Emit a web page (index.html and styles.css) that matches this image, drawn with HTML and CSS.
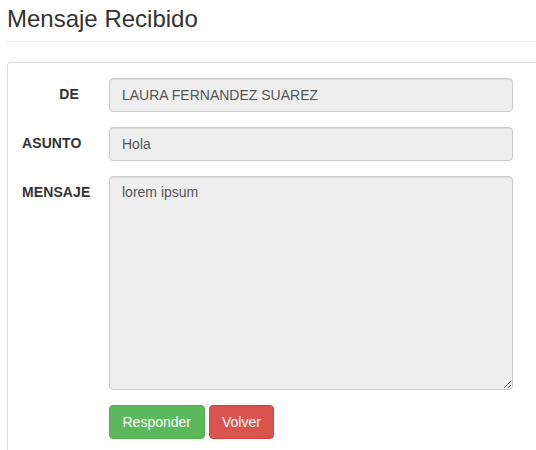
FILE: index.html
```html
<!DOCTYPE html>
<html lang="es">
<head>
<meta charset="utf-8">
<title>Mensaje Recibido</title>
<link rel="stylesheet" href="styles.css">
</head>
<body>
<div class="page">
  <h1 class="page-header">Mensaje Recibido</h1>
  <div class="panel">
    <form class="form">
      <label class="control-label label-de">DE</label>
      <input class="form-control" type="text" value="LAURA FERNANDEZ SUAREZ" readonly>
      <label class="control-label">ASUNTO</label>
      <input class="form-control" type="text" value="Hola" readonly>
      <label class="control-label">MENSAJE</label>
      <textarea class="form-control textarea" readonly>lorem ipsum</textarea>
      <span></span>
      <div class="actions">
        <button type="button" class="btn btn-success">Responder</button>
        <button type="button" class="btn btn-danger">Volver</button>
      </div>
    </form>
  </div>
</div>
</body>
</html>
```
FILE: styles.css
```css
html, body {
  margin: 0;
  padding: 0;
  overflow: hidden;
  background: #fff;
}
body {
  font-family: "Liberation Sans", Arial, sans-serif;
  font-size: 14px;
  line-height: 1.42857;
  color: #333;
}
.page {
  padding-left: 7px;
  height: 450px;
  box-sizing: border-box;
  display: flex;
  flex-direction: column;
}
.page-header {
  margin: 6px 0 0;
  padding-bottom: 9px;
  font-size: 24px;
  line-height: 26px;
  font-weight: 500;
  color: #333;
  border-bottom: 1px solid #eee;
}
.panel {
  margin-top: 20px;
  flex: 1;
  border: 1px solid #ddd;
  border-right: none;
  border-bottom: none;
  border-radius: 4px 0 0 0;
  padding: 15px 0 0 14px;
  box-sizing: border-box;
}
.form {
  display: grid;
  grid-template-columns: 57px 404px;
  column-gap: 30px;
  row-gap: 15px;
}
.control-label {
  font-weight: bold;
  padding-top: 7px;
  text-align: right;
  white-space: nowrap;
  letter-spacing: 0.1px;
}
.control-label:not(.label-de) {
  text-align: left;
}
.form-control {
  display: block;
  width: 100%;
  height: 34px;
  box-sizing: border-box;
  padding: 6px 12px;
  font-family: inherit;
  font-size: 14px;
  line-height: 1.42857;
  color: #555;
  background: #eee;
  border: 1px solid #ccc;
  border-radius: 4px;
  box-shadow: inset 0 1px 1px rgba(0,0,0,.075);
  margin: 0;
  outline: none;
}
.textarea {
  height: 214px;
  resize: vertical;
}
.actions {
  display: flex;
  gap: 4px;
}
.btn {
  height: 34px;
  padding: 7px 12.5px 5px;
  font-family: inherit;
  font-size: 14px;
  line-height: 1.42857;
  color: #fff;
  border: 1px solid transparent;
  border-radius: 4px;
  cursor: pointer;
}
.btn-success {
  background: #5cb85c;
  border-color: #4cae4c;
}
.btn-danger {
  background: #d9534f;
  border-color: #d43f3a;
}
```
